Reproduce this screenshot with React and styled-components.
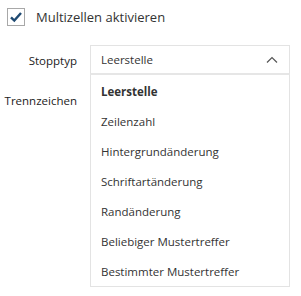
import styled, { createGlobalStyle } from "styled-components";
import { useState } from "react";

const GlobalStyle = createGlobalStyle`
  body {
    margin: 0;
    background: #ffffff;
    font-family: "Open Sans", "Noto Sans", sans-serif;
    color: #333333;
  }
`;

const Page = styled.div`
  width: 301px;
  height: 296px;
  padding: 8px 0 0 7px;
  box-sizing: border-box;
  display: flex;
  flex-direction: column;
`;

const CheckRow = styled.label`
  display: flex;
  align-items: center;
  gap: 11px;
  font-size: 13px;
  color: #333333;
  height: 18px;
`;

const Box = styled.span`
  width: 16px;
  height: 16px;
  border: 1px solid #a8a8a8;
  background: #ffffff;
  display: flex;
  align-items: center;
  justify-content: center;
`;

const Form = styled.div`
  display: grid;
  grid-template-columns: 70px 200px;
  column-gap: 13px;
  margin-top: 19px;
  row-gap: 10px;
`;

const Label = styled.div`
  font-size: 11.5px;
  color: #222222;
  text-align: right;
  display: flex;
  align-items: center;
  justify-content: flex-end;
  height: 30px;
`;

const SelectWrap = styled.div`
  position: relative;
`;

const Select = styled.div`
  height: 30px;
  box-sizing: border-box;
  border: 1px solid #e3e3e3;
  border-bottom: 2px solid #e6e6e6;
  display: flex;
  align-items: center;
  justify-content: space-between;
  padding: 0 11px 0 10px;
  font-size: 11.5px;
  color: #333333;
`;

const Menu = styled.ul`
  position: absolute;
  left: 0;
  top: 30px;
  width: 200px;
  box-sizing: border-box;
  margin: 0;
  padding: 1px 0 0;
  list-style: none;
  background: #ffffff;
  border: 1px solid #e3e3e3;
  border-top: none;
`;

const Item = styled.li`
  height: 30px;
  display: flex;
  align-items: center;
  padding-left: 10px;
  font-size: 11.5px;
  color: #333333;
  font-weight: ${(p) => (p.$selected ? 700 : 400)};
`;

const options = [
  "Leerstelle",
  "Zeilenzahl",
  "Hintergrundänderung",
  "Schriftartänderung",
  "Randänderung",
  "Beliebiger Mustertreffer",
  "Bestimmter Mustertreffer",
];

const App = () => {
  const [value] = useState("Leerstelle");

  return (
    <Page>
      <GlobalStyle />
      <CheckRow>
        <Box>
          <svg width="14" height="14" viewBox="0 0 14 14">
            <path
              d="M2 7.3 L5.3 10.6 L12 3"
              fill="none"
              stroke="#1f4a72"
              strokeWidth="2.4"
            />
          </svg>
        </Box>
        Multizellen aktivieren
      </CheckRow>
      <Form>
        <Label>Stopptyp</Label>
        <SelectWrap>
          <Select>
            {value}
            <svg width="12" height="8" viewBox="0 0 12 8">
              <path d="M1 6.5 L6 1.5 L11 6.5" fill="none" stroke="#555" strokeWidth="1.2" />
            </svg>
          </Select>
          <Menu>
            {options.map((o) => (
              <Item key={o} $selected={o === value}>
                {o}
              </Item>
            ))}
          </Menu>
        </SelectWrap>
        <Label>Trennzeichen</Label>
        <div />
      </Form>
    </Page>
  );
};

export default App;
